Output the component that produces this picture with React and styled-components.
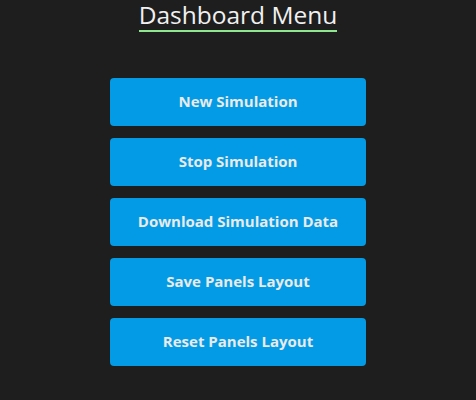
import styled, { createGlobalStyle } from "styled-components";

const GlobalStyle = createGlobalStyle`
  html, body {
    margin: 0;
    background: #1e1e1e;
  }
  body {
    font-family: "Open Sans", "Noto Sans", sans-serif;
  }
`;

const items = [
  "New Simulation",
  "Stop Simulation",
  "Download Simulation Data",
  "Save Panels Layout",
  "Reset Panels Layout",
];

const App = () => {
  return (
    <>
      <GlobalStyle />
      <Menu>
        <Title>Dashboard Menu</Title>
        <List>
          {items.map((label) => (
            <MenuButton key={label}>{label}</MenuButton>
          ))}
        </List>
      </Menu>
    </>
  );
};

export default App;

const Menu = styled.div`
  display: flex;
  flex-direction: column;
  align-items: center;
  height: 400px;
`;

const Title = styled.h2`
  margin: 0;
  color: #f0f0f0;
  font-size: 24.5px;
  font-weight: 400;
  line-height: 30px;
  border-bottom: 2px solid #8ee68e;
`;

const List = styled.div`
  display: flex;
  flex-direction: column;
  gap: 12px;
  margin-top: 46px;
`;

const MenuButton = styled.button`
  width: 256px;
  height: 48px;
  padding: 0 0 3px;
  border: none;
  border-radius: 4px;
  background: #039be5;
  color: #eaeaea;
  font-family: "Open Sans", "Noto Sans", sans-serif;
  font-size: 15px;
  font-weight: 700;
  cursor: pointer;
`;
